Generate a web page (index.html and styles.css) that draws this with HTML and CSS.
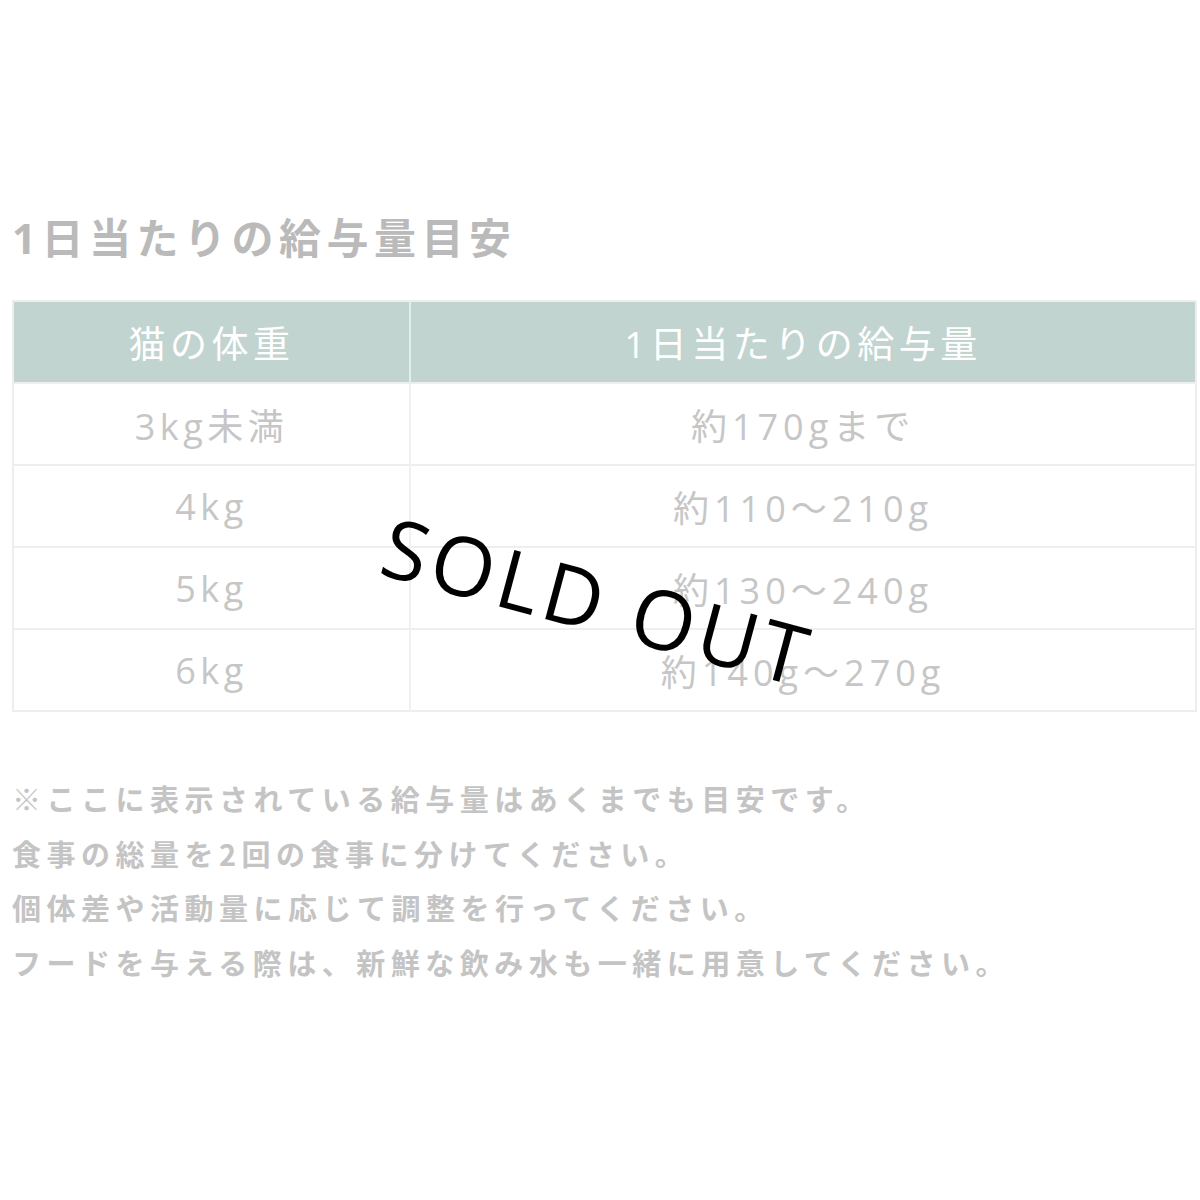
FILE: index.html
```html
<!DOCTYPE html>
<html lang="ja">
<head>
<meta charset="utf-8">
<title>1日当たりの給与量目安</title>
<link rel="stylesheet" href="styles.css">
</head>
<body>
<main class="page">
  <h1 class="title">1日当たりの給与量目安</h1>
  <table class="feed">
    <thead>
      <tr><th class="c1">猫の体重</th><th class="c2">1日当たりの給与量</th></tr>
    </thead>
    <tbody>
      <tr><td>3kg未満</td><td>約170gまで</td></tr>
      <tr><td>4kg</td><td>約110～210g</td></tr>
      <tr><td>5kg</td><td>約130～240g</td></tr>
      <tr><td>6kg</td><td>約140g～270g</td></tr>
    </tbody>
  </table>
  <div class="notes">
    <p>※ここに表示されている給与量はあくまでも目安です。</p>
    <p>食事の総量を2回の食事に分けてください。</p>
    <p>個体差や活動量に応じて調整を行ってください。</p>
    <p>フードを与える際は、新鮮な飲み水も一緒に用意してください。</p>
  </div>
  <div class="soldout">SOLD OUT</div>
</main>
</body>
</html>
```

FILE: styles.css
```css
html, body {
  margin: 0;
  padding: 0;
  background: #ffffff;
}

.page {
  position: relative;
  width: 1200px;
  height: 1200px;
  box-sizing: border-box;
  padding: 214px 3px 0 12px;
  font-family: "Open Sans", "Noto Sans CJK JP", sans-serif;
}

.title {
  margin: 0 0 38px 0;
  font-size: 42px;
  line-height: 48px;
  font-weight: 700;
  letter-spacing: 5.5px;
  color: #bababa;
}

.feed {
  width: 100%;
  border-collapse: collapse;
  table-layout: fixed;
  border: 2px solid #eeeeee;
}

.feed th,
.feed td {
  padding: 0;
  height: 80px;
  text-align: center;
  vertical-align: middle;
  font-size: 36px;
  font-weight: 400;
  letter-spacing: 4.5px;
}

.feed th {
  background: #c1d4d0;
  color: #ffffff;
  border-left: 2px solid #e4eeec;
  font-size: 37px;
}

.feed th.c1 {
  width: 33.4%;
  border-left: none;
}

.feed td {
  color: #c6c6c6;
  border-top: 2px solid #eeeeee;
  border-left: 2px solid #f1f1f1;
}

.feed td.wide,
.feed td:last-child {
  letter-spacing: 5px;
}

.feed td:first-child {
  border-left: none;
}

.notes {
  margin-top: 59px;
}

.notes p {
  margin: 0;
  font-size: 29px;
  line-height: 54.7px;
  font-weight: 700;
  letter-spacing: 5.5px;
  color: #c4c4c4;
  font-family: "Noto Sans CJK JP", sans-serif;
}

.soldout {
  position: absolute;
  left: 598px;
  top: 600px;
  transform: translate(-50%, -50%) rotate(15deg);
  font-family: "Open Sans", sans-serif;
  font-size: 82px;
  font-weight: 400;
  letter-spacing: 5px;
  line-height: 1;
  color: #000000;
  white-space: nowrap;
}
```
